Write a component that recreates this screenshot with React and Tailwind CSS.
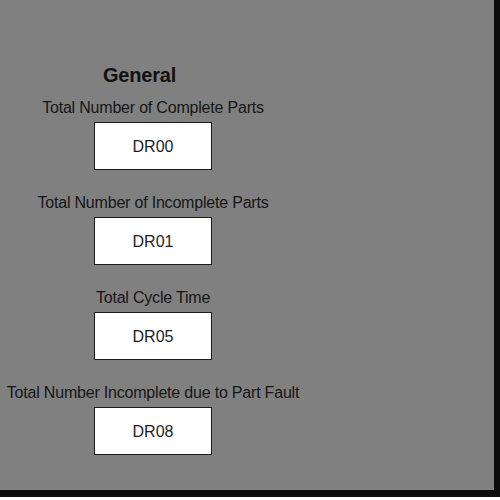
const fields = [
  { label: "Total Number of Complete Parts", value: "DR00" },
  { label: "Total Number of Incomplete Parts", value: "DR01" },
  { label: "Total Cycle Time", value: "DR05" },
  { label: "Total Number Incomplete due to Part Fault", value: "DR08" },
];

function Field({ label, value }) {
  return (
    <div className="flex flex-col items-center">
      <div className="h-[23px] whitespace-nowrap text-[16px] leading-[23px] tracking-[-0.2px] text-[#161616]">{label}</div>
      <div className="mt-[3px] flex h-[48px] w-[118px] items-center justify-center border-[1.5px] border-[#1a1a1a] bg-white pt-[1px] text-[16px] text-[#1e1e1e]">
        {value}
      </div>
    </div>
  );
}

export default function App() {
  return (
    <div className="flex h-[500px] w-[500px] flex-col bg-white font-['Liberation_Sans',Arial,sans-serif]">
      <div className="h-[497px] border-b-[7px] border-r-[6px] border-[#0d0d0d] bg-[#808080]">
        <div className="flex w-[306px] flex-col items-center pt-[64px]">
          <h1 className="mr-[27px] h-[22px] text-[20px] font-bold leading-[22px] tracking-[-0.2px] text-[#111]">General</h1>
          <div className="mt-[10px] flex flex-col items-center gap-[21px]">
            {fields.map((field) => (
              <Field key={field.value} {...field} />
            ))}
          </div>
        </div>
      </div>
    </div>
  );
}
